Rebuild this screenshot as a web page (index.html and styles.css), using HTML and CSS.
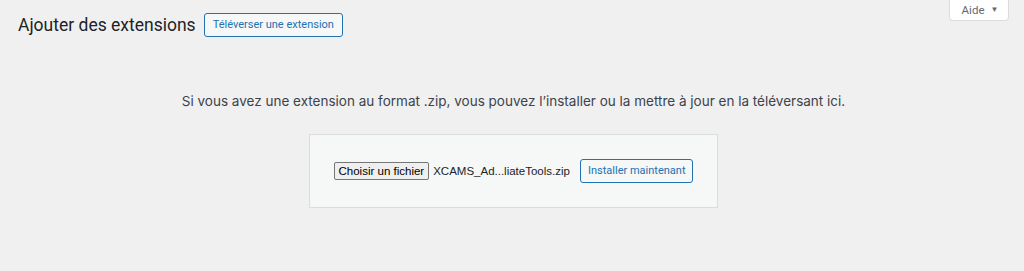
FILE: index.html
```html
<!DOCTYPE html>
<html lang="fr">
<head>
<meta charset="utf-8">
<link rel="stylesheet" href="styles.css">
</head>
<body>
<div class="help-tab"><span>Aide</span><span class="arrow">▼</span></div>
<div class="wrap">
  <div class="page-head">
    <h1 class="title">Ajouter des extensions</h1>
    <button class="btn">Téléverser une extension</button>
  </div>
  <p class="install-help">Si vous avez une extension au format .zip, vous pouvez l’installer ou la mettre à jour en la téléversant ici.</p>
  <div class="upload-row">
    <form class="upload-form">
      <span class="file-btn">Choisir un fichier</span>
      <span class="file-name">XCAMS_Ad...liateTools.zip</span>
      <button type="button" class="btn btn-install">Installer maintenant</button>
    </form>
  </div>
</div>
</body>
</html>
```
FILE: styles.css
```css
html, body {
  margin: 0;
  padding: 0;
  background: #f0f0f1;
  font-family: Inter, Roboto, "Liberation Sans", sans-serif;
  color: #3c434a;
  height: 271px;
  overflow: hidden;
}
.help-tab {
  position: absolute;
  top: 0;
  left: 949px;
  width: 60px;
  height: 21px;
  box-sizing: border-box;
  background: #fff;
  border: 1px solid #dcdcde;
  border-top: none;
  border-radius: 0 0 4px 4px;
  display: flex;
  align-items: center;
  justify-content: center;
  gap: 6px;
  font-family: Roboto, sans-serif;
  font-size: 11.5px;
  color: #646970;
  padding: 0 0 1px 2px;
}
.help-tab .arrow {
  font-size: 8px;
  color: #646970;
}
.wrap {
  padding: 13px 0 0 18px;
}
.page-head {
  display: flex;
  align-items: center;
  gap: 8px;
  height: 24px;
}
.title {
  margin: 0;
  font-family: Roboto, sans-serif;
  font-size: 17.5px;
  font-weight: 400;
  color: #1d2327;
  line-height: 24px;
}
.btn {
  font-family: Roboto, "Liberation Sans", sans-serif;
  font-size: 11px;
  color: #2271b1;
  background: #f6f7f7;
  border: 1px solid #2271b1;
  border-radius: 3px;
  height: 24px;
  padding: 0 8px;
  margin: 0;
  box-sizing: border-box;
  line-height: 22px;
}
.btn-install {
  padding: 0 7px;
}
.install-help {
  margin: 54px 15px 0 0;
  text-align: center;
  font-size: 13.5px;
  line-height: 20px;
  color: #3c434a;
}
.upload-row {
  display: flex;
  justify-content: center;
  padding-right: 15px;
  margin-top: 23px;
}
.upload-form {
  display: flex;
  align-items: center;
  background: #f6f7f7;
  border: 1px solid #dcdcde;
  padding: 24px;
}
.file-btn {
  font-family: "Liberation Sans", Arial, sans-serif;
  font-size: 11.5px;
  color: #000;
  background: #efefef;
  border: 1px solid #767676;
  border-radius: 2px;
  height: 18px;
  box-sizing: border-box;
  padding: 0 4px;
  line-height: 16px;
}
.file-name {
  font-family: "Liberation Sans", Arial, sans-serif;
  font-size: 11.5px;
  color: #1d2327;
  margin-left: 4px;
  margin-right: 10px;
}
```
